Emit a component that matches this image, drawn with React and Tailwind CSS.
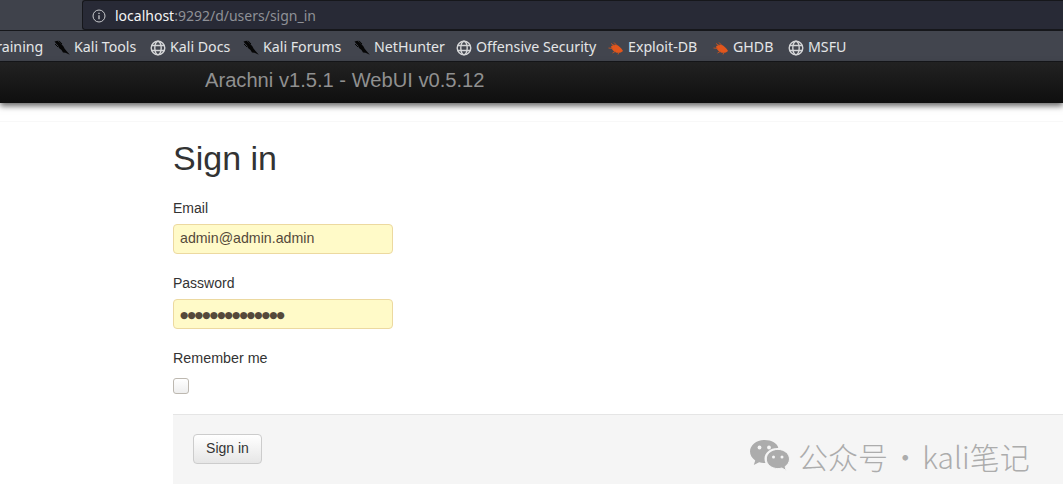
import React from 'react';

const bookmarks = [
  { label: 'Kali Tools', icon: 'dragon', width: 'w-[96px]' },
  { label: 'Kali Docs', icon: 'globe', width: 'w-[93px]' },
  { label: 'Kali Forums', icon: 'dragon', width: 'w-[111px]' },
  { label: 'NetHunter', icon: 'dragon', width: 'w-[102px]' },
  { label: 'Offensive Security', icon: 'globe', width: 'w-[152px]' },
  { label: 'Exploit-DB', icon: 'bug', width: 'w-[105px]' },
  { label: 'GHDB', icon: 'bug', width: 'w-[75px]' },
  { label: 'MSFU', icon: 'globe', width: 'w-[70px]' },
];

const DragonIcon = () => (
  <svg width="16" height="16" viewBox="0 0 16 16" className="shrink-0">
    <path d="M0.500 1.500 L3.500 0.800 L6 2.800 L8 4.800 L9.500 6.500 L10.500 8.500 L12.500 11 L15.800 14.800 L11.500 12.800 L9 12.500 L7.500 10 L5 8 L4 5.500 L2 3.500 Z" fill="#060606" />
    <path d="M5 0.800 L8 4 M1 4 L4 7" stroke="#060606" strokeWidth="1" />
  </svg>
);

const GlobeIcon = () => (
  <svg width="16" height="16" viewBox="0 0 16 16" fill="none" stroke="#d4d5d7" strokeWidth="1.400" className="shrink-0">
    <circle cx="8" cy="8" r="6.800" />
    <ellipse cx="8" cy="8" rx="3.200" ry="6.800" />
    <path d="M1.600 5.500 H14.400 M1.600 10.500 H14.400" />
  </svg>
);

const BugIcon = () => (
  <svg width="16" height="16" viewBox="0 0 16 16" className="shrink-0">
    <path d="M3 6.500 C5 4.500 8 4 10 5.500 C12 7 14 9 15 11 C13 13 9.500 13.500 7 12 C5 11 3.500 9 3 6.500 Z" fill="#e2561c" />
    <path d="M0.500 8 L5 8.500 M3 3.500 L7 6 M6 2.500 L9 5.500 M4.500 13 L8 11 M10 14.500 L11 12" stroke="#c9531f" strokeWidth="0.900" />
  </svg>
);

const icons = { dragon: DragonIcon, globe: GlobeIcon, bug: BugIcon };

const WeChatIcon = () => (
  <svg width="41" height="33" viewBox="0 0 41 33" fill="#acacac" className="shrink-0">
    <path d="M15.500 1C7.500 1 1 6.200 1 12.600c0 3.600 2 6.700 5.200 8.900L4.800 26l5.300-2.800c1.700.5 3.500.8 5.400.8h.9c-.6-1.300-.9-2.700-.9-4.200 0-6 5.700-10.800 12.800-10.800h1C28.600 4.500 22.600 1 15.500 1z" />
    <path d="M40.500 20c0-5.300-5.300-9.600-11.600-9.600S17.300 14.700 17.300 20s5.300 9.600 11.600 9.600c1.400 0 2.700-.2 4-.6l4.300 2.500-1.100-3.900c2.700-1.900 4.400-4.600 4.400-7.600z" stroke="#f5f5f5" strokeWidth="1" />
    <circle cx="10.500" cy="8.500" r="1.900" fill="#f5f5f5" />
    <circle cx="20" cy="8.500" r="1.900" fill="#f5f5f5" />
    <circle cx="24.500" cy="18" r="1.500" fill="#f5f5f5" />
    <circle cx="33" cy="18" r="1.500" fill="#f5f5f5" />
  </svg>
);

export default function App() {
  return (
    <div className="h-[499px] w-[1063px] overflow-hidden bg-white relative font-['Liberation_Sans',sans-serif] text-sm text-[#333]">
      {/* browser toolbar */}
      <div className="h-[31px] bg-[#3f424b] pl-[82px] border-b border-[#16171b]">
        <div className="h-[30px] flex items-center pl-[9px] pt-[2px] bg-[#282a36] border border-[#16171b] rounded-l-[3px] border-r-0 font-['Noto_Sans',sans-serif] text-[14px]">
          <svg width="14" height="14" viewBox="0 0 14 14" fill="none" stroke="#c9cacd" strokeWidth="1" className="shrink-0">
            <circle cx="7" cy="7" r="6" />
            <path d="M7 6.200 V10.200 M7 3.700 V5" strokeWidth="1.300" />
          </svg>
          <span className="ml-[9px] text-[#f4f4f5]">localhost</span>
          <span className="text-[#8f9197]">:9292/d/users/sign_in</span>
        </div>
      </div>

      {/* bookmarks */}
      <div className="h-[31px] pt-[3px] bg-[#42454e] border-b border-[#16171b] flex items-center overflow-hidden font-['Noto_Sans',sans-serif] text-[14.2px] text-[#e4e5e7]">
        <span className="w-[65px] shrink-0 -ml-[11px]">Training</span>
        {bookmarks.map((b) => {
          const Icon = icons[b.icon];
          return (
            <div key={b.label} className={`flex items-center gap-[4px] shrink-0 ${b.width}`}>
              <Icon />
              <span className="whitespace-nowrap">{b.label}</span>
            </div>
          );
        })}
      </div>

      {/* app navbar */}
      <div className="h-[41px] bg-gradient-to-b from-[#222222] to-[#0f0f0f] flex items-center pl-[205px] pb-[4px] text-[20.15px] leading-none text-[#909090] shadow-[0_3px_6px_rgba(0,0,0,0.6)] relative">
        Arachni v1.5.1 - WebUI v0.5.12
      </div>

      <div className="h-[19px] border-b border-[#f8f8f8]" />

      <div className="pl-[173px]">
        <h1 className="text-[34px] leading-[40px] mt-[16px] text-[#333]">Sign in</h1>

        <label className="block leading-[20px] mt-[20px]">Email</label>
        <input
          readOnly
          value="admin@admin.admin"
          className="block w-[220px] h-[30px] mt-[6px] pl-[6px] pr-[7px] pb-[2px] bg-[#fffac8] border border-[#ecd9a0] rounded-[4px] text-[14.2px] text-[#55493a] outline-none"
        />

        <label className="block leading-[20px] mt-[19px]">Password</label>
        <input
          readOnly
          value="●●●●●●●●●●●●●●"
          className="block w-[220px] h-[30px] mt-[6px] pl-[6px] pr-[7px] bg-[#fffac8] border border-[#ecd9a0] rounded-[4px] text-[#55493a] text-[9.5px] tracking-[-0.86px] font-['DejaVu_Sans',sans-serif] outline-none"
        />

        <label className="block leading-[20px] mt-[19px] text-[14.3px]">Remember me</label>
        <div className="w-[16px] h-[16px] mt-[10px] rounded-[3px] border border-[#bdb8b0] bg-gradient-to-b from-white to-[#eeeeee]" />

        <div className="h-[70px] mt-[20px] bg-[#f5f5f5] border-t border-[#e5e5e5] pl-[20px] pt-[19px]">
          <button className="w-[69px] h-[30px] pb-[2px] rounded-[4px] border border-[#cccccc] bg-gradient-to-b from-white to-[#e6e6e6] text-[#333] text-sm leading-none">
            Sign in
          </button>
        </div>
      </div>

      {/* watermark */}
      <div className="absolute left-[749px] top-[439px] flex items-center text-[#acacac] text-[30px] leading-none">
        <WeChatIcon />
        <span className="ml-[8px] whitespace-nowrap font-light [word-spacing:-4.5px] font-['Noto_Sans_CJK_SC',sans-serif]">公众号 · kali笔记</span>
      </div>
    </div>
  );
}
